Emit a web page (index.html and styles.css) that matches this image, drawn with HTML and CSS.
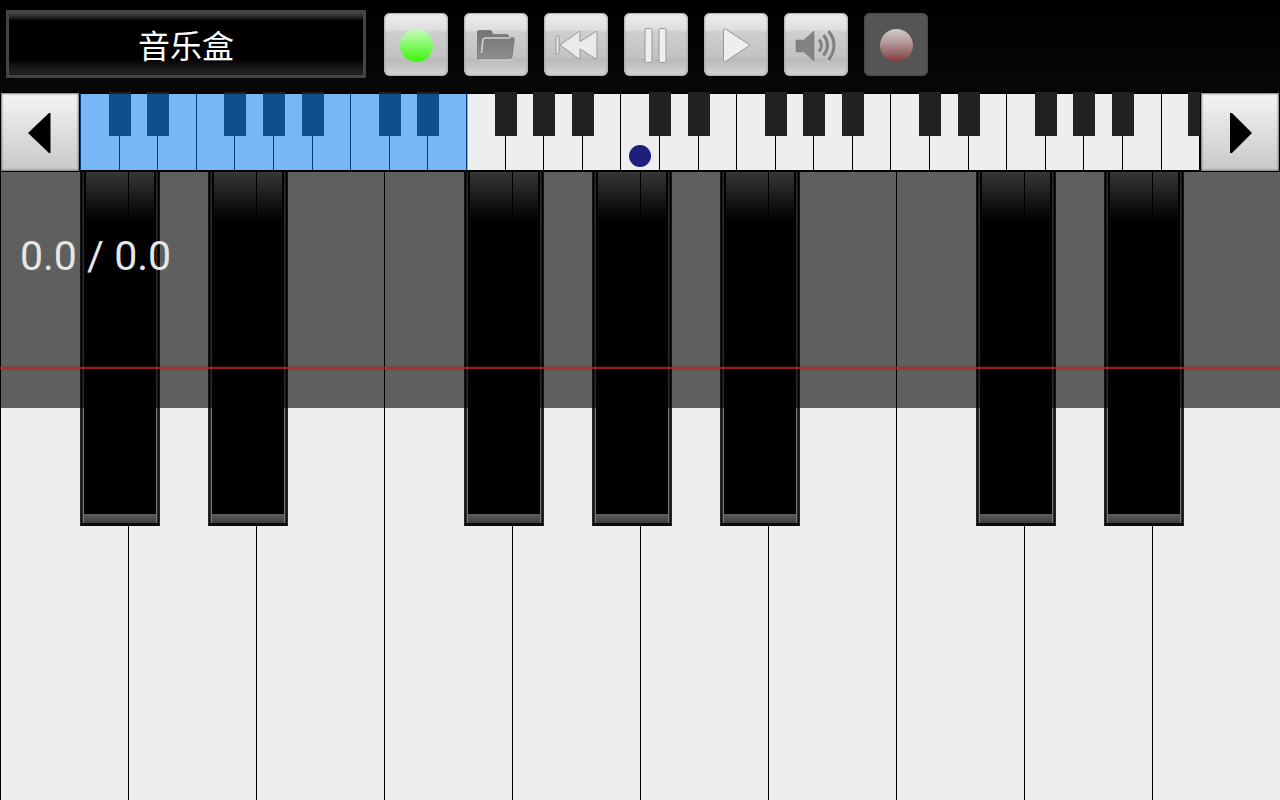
FILE: index.html
```html
<!DOCTYPE html>
<html lang="zh-CN">
<head>
    <meta charset="utf-8">
    <title>音乐盒</title>
    <link rel="stylesheet" href="styles.css">
</head>
<body>

<header class="toolbar">
    <button class="song">音乐盒</button>
    <div class="tools">
        <button class="tool" aria-label="Status">
            <svg viewBox="0 0 64 64">
                <defs><linearGradient id="green" x1="0" y1="0" x2="0" y2="1"><stop offset="0" stop-color="#c6fcbc"/><stop offset="1" stop-color="#3cf40c"/></linearGradient></defs>
                <circle cx="32.500" cy="32.500" r="16.500" fill="url(#green)"/>
            </svg>
        </button>
        <button class="tool" aria-label="Open">
            <svg viewBox="0 0 64 64">
                <defs><linearGradient id="gray" x1="0" y1="0" x2="0" y2="1"><stop offset="0" stop-color="#747474"/><stop offset="1" stop-color="#8e8e8e"/></linearGradient></defs>
                <path d="M13.500 19 q0-1.500 1.500-1.500 h11 q1.500 0 2 1.500 l.5 2.500 h14.500 q1.500 0 2 3 h3.500 q2 0 1.800 2 l-2.300 18 q-.3 1.800-2 1.800 h-31 q-1.500 0-1.500-1.500z" fill="url(#gray)" stroke="#666" stroke-width=".6"/>
                <path d="M17.500 40 l1.300-12.500 q.3-2.500 2.700-2.500 h25" fill="none" stroke="#d2d2d2" stroke-width="1.600"/>
                <path d="M15 46.800 h31 q2 0 2.300-2" fill="none" stroke="#e6e6e6" stroke-width=".8"/>
            </svg>
        </button>
        <button class="tool" aria-label="Rewind">
            <svg viewBox="0 0 64 64">
                <g fill="#eaeaea" stroke="#979797" stroke-width="1" stroke-linejoin="round">
                    <rect x="12" y="23" width="3" height="18" rx="1"/>
                    <path d="M16 32 L35 18.500 q1-.5 1 1 V28.500 L52 18.500 q1-.5 1 1 V45.500 q0 1-1 .5 L36 36 V45.500 q0 1-1 .5z"/>
                </g>
            </svg>
        </button>
        <button class="tool" aria-label="Pause">
            <svg viewBox="0 0 64 64">
                <g fill="#eee" stroke="#979797" stroke-width="1">
                    <rect x="21" y="15.500" width="7" height="34" rx="1.500"/>
                    <rect x="35" y="15.500" width="7" height="34" rx="1.500"/>
                </g>
            </svg>
        </button>
        <button class="tool" aria-label="Play">
            <svg viewBox="0 0 64 64">
                <path d="M19.500 17 q0-2 2-1 L44.500 31 q1.500 1 0 2.200 L21.500 48.500 q-2 1.200-2-1z" fill="#eee" stroke="#979797" stroke-width="1"/>
            </svg>
        </button>
        <button class="tool" aria-label="Volume">
            <svg viewBox="0 0 64 64">
                <path d="M12 27 h8 l10-9 v30 l-10-9 h-8z" fill="#828282" stroke="#777" stroke-width=".5"/>
                <path d="M35 26.500 q5 6 0 12 M39.500 22 q8 10 0 20.500 M44.500 18 q11 14 0 29" fill="none" stroke="#808080" stroke-width="3"/>
                <path d="M34 39 l1.500 1.500 M38.500 43 l1.500 1.500 M43.500 47.500 l1.500 1.500" stroke="#ddd" stroke-width="1"/>
            </svg>
        </button>
        <button class="tool record" aria-label="Record">
            <svg viewBox="0 0 64 64">
                <defs><linearGradient id="red" x1="0" y1="0" x2="0" y2="1"><stop offset="0" stop-color="#cfcaca"/><stop offset=".4" stop-color="#b59a9a"/><stop offset="1" stop-color="#7e3b3b"/></linearGradient></defs>
                <circle cx="32.500" cy="32.500" r="16.500" fill="url(#red)"/>
            </svg>
        </button>
    </div>
</header>

<nav class="range">
    <button class="arrow" aria-label="Previous keys">
        <svg viewBox="0 0 80 80"><path d="M28 41 L49 21 H50.500 V61 H49z"/></svg>
    </button>
    <div class="overview">
        <i></i><i class="sharp"></i><i class="sharp"></i><i></i><i class="sharp"></i><i class="sharp"></i><i class="sharp"></i>
        <i></i><i class="sharp"></i><i class="sharp"></i><i></i><i class="sharp"></i><i class="sharp"></i><i class="sharp"></i>
        <i class="middle"></i><i class="sharp"></i><i class="sharp"></i><i></i><i class="sharp"></i><i class="sharp"></i><i class="sharp"></i>
        <i></i><i class="sharp"></i><i class="sharp"></i><i></i><i class="sharp"></i><i class="sharp"></i><i class="sharp"></i>
        <i class="last"></i>
        <div class="visible"></div>
    </div>
    <button class="arrow" aria-label="Next keys">
        <svg viewBox="0 0 80 80"><path d="M52 41 L32 21 H30 V61 H32z"/></svg>
    </button>
</nav>

<main class="piano">
    <!-- each black key hangs off the white key to its right -->
    <div class="note"><button class="white" aria-label="C"></button></div>
    <div class="note"><button class="white" aria-label="D"></button><button class="black" aria-label="C#"></button></div>
    <div class="note"><button class="white" aria-label="E"></button><button class="black" aria-label="D#"></button></div>
    <div class="note"><button class="white" aria-label="F"></button></div>
    <div class="note"><button class="white" aria-label="G"></button><button class="black" aria-label="F#"></button></div>
    <div class="note"><button class="white" aria-label="A"></button><button class="black" aria-label="G#"></button></div>
    <div class="note"><button class="white" aria-label="B"></button><button class="black" aria-label="A#"></button></div>
    <div class="note"><button class="white" aria-label="C"></button></div>
    <div class="note"><button class="white" aria-label="D"></button><button class="black" aria-label="C#"></button></div>
    <div class="note"><button class="white" aria-label="E"></button><button class="black" aria-label="D#"></button></div>

    <div class="score">
        <span class="time">0.0 / 0.0</span>
    </div>
</main>

</body>
</html>
```
FILE: styles.css
```css
* { box-sizing: border-box; }
body {
    margin: 0;
    height: 100vh;
    display: flex;
    flex-direction: column;
    overflow: hidden;
    background: #000;
    font-family: Roboto, "Noto Sans CJK SC", sans-serif;
}
button {
    margin: 0;
    padding: 0;
    border: 0;
    font-family: inherit;
}
svg { display: block; width: 100%; }

/* top bar */
.toolbar {
    display: flex;
    align-items: flex-start;
    gap: 18px;
    height: 92px;
    padding: 10px 6px 0;
    background: linear-gradient(#000, #050807);
}
.song {
    width: 360px;
    height: 68px;
    padding-top: 6px;
    border: 3px solid #444;
    background: linear-gradient(#424242 0, #383838 2px, #000 8px, #000 46px, #1c1c1c 56px, #202020);
    color: #fff;
    font-size: 32px;
    line-height: 48px;
}
.tools {
    display: flex;
    gap: 16px;
    padding-top: 3px;
}
.tool {
    width: 64px;
    height: 63px;
    border-radius: 6px;
    background: linear-gradient(#f0f0f0, #dedede 26%, #cfcfcf 30%, #c2c2c2 70%, #b9b9b9 74%, #d6d6d6);
    box-shadow: inset 0 0 2px 1px #aaa;
}
.record {
    background: #555;
    box-shadow: inset 0 0 1px 1px #4a4a4a;
}

/* small keyboard with the visible part marked */
.range {
    display: grid;
    grid-template-columns: 80px 1fr 80px;
    height: 80px;
}
.arrow {
    border: 1px solid #000;
    background: linear-gradient(#f4f4f4, #c8c8c8);
    box-shadow: inset 0 0 2px 1px #777;
}
.arrow svg { width: 80px; margin: -1px; }
.overview {
    position: relative;
    display: flex;
    overflow: hidden;
    border-bottom: 2px solid #000;
}
.overview i {
    position: relative;
    flex: 1;
    margin-top: 2px;
    border-right: 1px solid #000;
    background: #eee;
}
.overview i:first-child { border-left: 1px solid #000; }
.overview .sharp::before, .overview .last::after {
    content: "";
    position: absolute;
    z-index: 1;
    top: -2px;
    left: -11px;
    width: 22px;
    height: 44px;
    background: #222;
}
.overview .last::after {
    left: auto;
    right: -11px;
}
.middle::after {
    content: "";
    position: absolute;
    left: 8px;
    bottom: 3px;
    width: 22px;
    height: 22px;
    border-radius: 50%;
    background: #1e1e7c;
}
.visible {
    position: absolute;
    z-index: 2;
    top: 2px;
    bottom: -2px;
    left: 0;
    width: calc(1000% / 29 + 2px);
    background: rgba(0, 124, 255, .49);
}

/* playing keys */
.piano {
    position: relative;
    flex: 1;
    display: flex;
}
.note {
    position: relative;
    flex: 1;
    display: flex;
}
.white {
    flex: 1;
    border-left: 1px solid #000;
    background: #eee;
}
.black {
    position: absolute;
    z-index: 1;
    top: 0;
    left: -48px;
    width: 80px;
    height: 354px;
    border: 1px solid #2c2c2c;
    border-top: 0;
    border-bottom: 3px solid #0a0a0a;
    background: linear-gradient(#606060, #3c3c3c) bottom / 72px 9px no-repeat, #000;
    box-shadow: inset 1px 0 #0c0c0c, inset -1px 0 #0c0c0c, inset 2px 0 #333, inset -2px 0 #333, inset 3px 0 #777, inset -3px 0 #777;
}
.black::before {
    content: "";
    position: absolute;
    top: 0;
    left: 5px;
    right: 5px;
    height: 50px;
    background: linear-gradient(90deg, transparent 42px, #000 42px, #000 43px, transparent 43px), linear-gradient(#888, #000);
}

/* falling notes area */
.score {
    position: absolute;
    z-index: 2;
    top: 0;
    left: 0;
    right: 0;
    height: 236px;
    padding: 60px 20px;
    background: rgba(0, 0, 0, .6);
}
.score::after {
    content: "";
    position: absolute;
    left: 0;
    right: 0;
    top: 195px;
    height: 2px;
    background: rgba(190, 40, 40, .75);
    box-shadow: 0 0 1px 1px rgba(130, 20, 20, .3);
}
.time {
    color: #e6e6e6;
    font-size: 41px;
    line-height: 48px;
}
```
